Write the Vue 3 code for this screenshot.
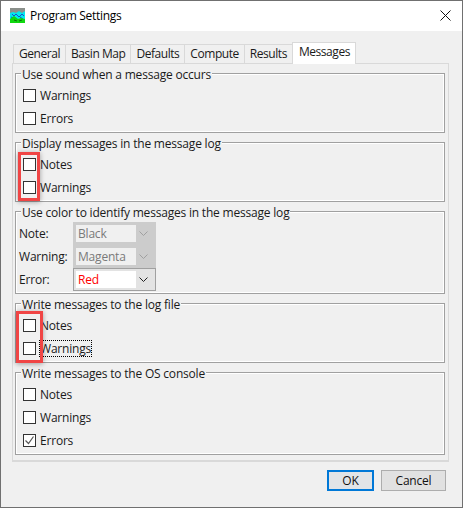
<script setup>
const tabs = ["General", "Basin Map", "Defaults", "Compute", "Results", "Messages"];

const groups = [
	{ title: "Use sound when a message occurs", items: [{ label: "Warnings" }, { label: "Errors" }] },
	{ title: "Display messages in the message log", items: [{ label: "Notes" }, { label: "Warnings" }] },
	{
		title: "Use color to identify messages in the message log",
		combos: [
			{ label: "Note:", value: "Black", disabled: true },
			{ label: "Warning:", value: "Magenta", disabled: true },
			{ label: "Error:", value: "Red", disabled: false },
		],
	},
	{ title: "Write messages to the log file", items: [{ label: "Notes" }, { label: "Warnings", focus: true }] },
	{
		title: "Write messages to the OS console",
		items: [{ label: "Notes" }, { label: "Warnings" }, { label: "Errors", checked: true }],
	},
];
</script>

<template>
	<div class="dialog">
		<header class="titlebar">
			<svg class="app-icon" width="15" height="15" viewBox="0 0 15 15">
				<rect width="15" height="15" fill="#00e8f0" />
				<path d="M0 0h15v3l-3 2-3-2-3 2-3-1-3 1z" fill="#8a8f8a" />
				<path d="M2 6l2 2 2-2 3 3 3-3 2 2M1 9l2 1M10 9l3 2" stroke="#1a50c8" stroke-width="1" fill="none" />
				<path d="M0 11l4-3 4 3 3-1 4 1v4H0z" fill="#10d810" />
				<path d="M4 12l3 1M9 13l3-1" stroke="#087008" stroke-width="1" fill="none" />
			</svg>
			<span class="title">Program Settings</span>
			<svg class="close" width="11" height="11" viewBox="0 0 11 11">
				<path d="M.5.5l10 10M10.5.5l-10 10" stroke="#111" stroke-width="1" fill="none" />
			</svg>
		</header>

		<main class="body">
			<nav class="tabs">
				<div
					v-for="t in tabs"
					:key="t"
					class="tab"
					:class="{ active: t === 'Messages' }"
				>
					{{ t }}
				</div>
			</nav>

			<section class="panel">
				<fieldset v-for="g in groups" :key="g.title" class="group">
					<legend>{{ g.title }}</legend>

					<div v-for="item in g.items" :key="item.label" class="row check-row">
						<span class="check">
							<svg v-if="item.checked" width="11" height="11" viewBox="0 0 11 11">
								<path d="M1.5 5.5l3 3 5-7" stroke="#555" stroke-width="1.2" fill="none" />
							</svg>
						</span>
						<span class="label" :class="{ focus: item.focus }">{{ item.label }}</span>
					</div>

					<div v-for="c in g.combos" :key="c.label" class="row combo-row">
						<span class="combo-label">{{ c.label }}</span>
						<div class="combo" :class="{ disabled: c.disabled }">
							<span class="combo-value" :class="{ red: c.value === 'Red' }">{{ c.value }}</span>
							<svg class="arrow" width="9" height="5" viewBox="0 0 9 5">
								<path d="M.5.5l4 4 4-4" fill="none" stroke-width="1" />
							</svg>
						</div>
					</div>
				</fieldset>
			</section>

			<footer class="actions">
				<button class="btn default">OK</button>
				<button class="btn">Cancel</button>
			</footer>
		</main>

		<!-- red callouts drawn over the screenshot -->
		<div class="callout one"></div>
		<div class="callout two"></div>
	</div>
</template>

<style>
	html,
	body {
		margin: 0;
		background: #f0f0f0;
	}
</style>

<style scoped>
	.dialog {
		position: relative;
		box-sizing: border-box;
		width: 463px;
		height: 508px;
		border: 1px solid #707070;
		background: #f0f0f0;
		font-family: "Open Sans", "Noto Sans", sans-serif;
		font-size: 12px;
		letter-spacing: -0.2px;
		color: #1a1a1a;
		overflow: hidden;
		display: flex;
		flex-direction: column;
	}

	.titlebar {
		box-sizing: border-box;
		height: 30px;
		flex: none;
		background: #fff;
		display: flex;
		align-items: center;
		padding: 0 10px 1px 9px;
	}
	.app-icon {
		margin-right: 5px;
	}
	.title {
		flex: 1;
		color: #000;
		letter-spacing: -0.3px;
	}
	.close {
		margin-right: 1px;
	}

	.body {
		flex: 1;
		display: flex;
		flex-direction: column;
		padding: 12px 13px 0 11px;
		min-height: 0;
	}

	.tabs {
		display: flex;
		height: 20px;
		padding-left: 1px;
		align-items: flex-end;
		flex: none;
		position: relative;
		z-index: 1;
		letter-spacing: -0.45px;
	}
	.tab {
		height: 19px;
		box-sizing: border-box;
		padding: 0 5px;
		line-height: 18px;
		background: #f0f0f0;
		border: 1px solid #d9d9d9;
		border-bottom: none;
		margin-right: -1px;
	}
	.tab.active {
		height: 22px;
		line-height: 17px;
		background: #fff;
		padding: 0 5px 0 6px;
		margin-bottom: -1px;
	}

	.panel {
		box-sizing: border-box;
		height: 399px;
		flex: none;
		border: 1px solid #d9d9d9;
		border-bottom-width: 2px;
		padding: 0 3px 0 2px;
		display: flex;
		flex-direction: column;
	}

	.group {
		margin: 0;
		padding: 1px 0 2px 7px;
		border: 1px solid #a0a0a0;
		box-shadow: inset 0 0 0 1px #fff;
		min-width: 0;
	}
	.group legend {
		padding: 3px 1px 0;
		margin-left: -2px;
		line-height: 16px;
		background: #f0f0f0;
	}

	.row {
		height: 23px;
		display: flex;
		align-items: center;
	}

	.check {
		box-sizing: border-box;
		width: 13px;
		height: 13px;
		border: 1px solid #333;
		background: #fff;
		margin-right: 4px;
		display: flex;
		align-items: center;
		justify-content: center;
	}
	.label.focus {
		outline: 1px dotted #000;
		outline-offset: 0;
		line-height: 15px;
	}

	.combo-row {
		margin-left: -4px;
	}
	.combo-label {
		width: 54px;
	}
	.combo {
		box-sizing: border-box;
		width: 83px;
		height: 23px;
		border: 1px solid #a0a0a0;
		background: #e3e3e3;
		display: flex;
		align-items: center;
		justify-content: space-between;
		padding: 2px 7px 2px 2px;
	}
	.combo.disabled {
		background: #ccc;
		border-color: #ccc;
	}
	.combo-value {
		box-sizing: border-box;
		flex: none;
		width: 60px;
		height: 17px;
		line-height: 17px;
		padding-left: 2px;
		background: #fff;
	}
	.combo.disabled .combo-value {
		background: #f0f0f0;
		color: #7a7a7a;
	}
	.combo-value.red {
		color: #f00;
	}
	.arrow {
		stroke: #222;
	}
	.combo.disabled .arrow {
		stroke: #a0a0a0;
	}

	.actions {
		display: flex;
		justify-content: flex-end;
		gap: 7px;
		padding: 8px 3px 0 0;
	}
	.btn {
		box-sizing: border-box;
		height: 21px;
		padding: 0;
		font: inherit;
		letter-spacing: inherit;
		color: #111;
		background: #e1e1e1;
		border: 1px solid #adadad;
		width: 65px;
	}
	.btn.default {
		width: 47px;
		border: 2px solid #0078d7;
		background: #e1e4e7;
	}

	.callout {
		position: absolute;
		box-sizing: border-box;
		border: 3px solid #f04545;
		box-shadow: 0 1px 5px rgba(0, 0, 0, 0.35);
	}
	.callout.one {
		left: 17px;
		top: 151px;
		width: 22px;
		height: 49px;
	}
	.callout.two {
		left: 15px;
		top: 310px;
		width: 27px;
		height: 52px;
	}
</style>
